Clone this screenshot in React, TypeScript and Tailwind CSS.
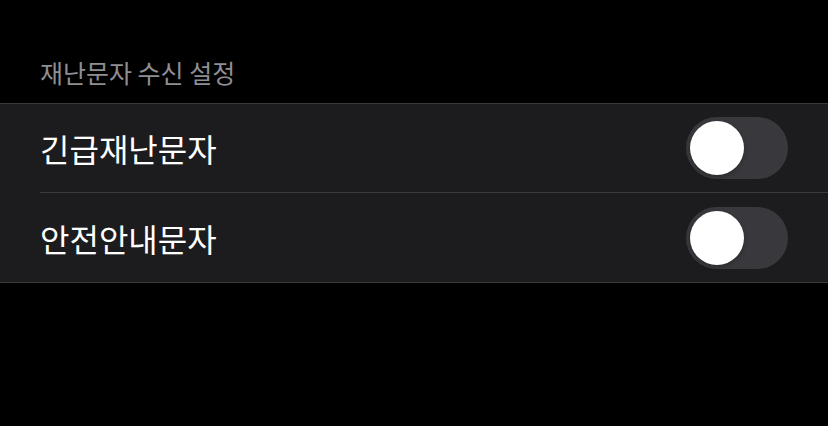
const rows = [
  { label: "긴급재난문자", on: false },
  { label: "안전안내문자", on: false },
];

function Toggle({ on }: { on: boolean }) {
  return (
    <div
      className={`w-[102px] h-[62px] rounded-full p-[4px] flex items-center ${
        on ? "bg-[#30d158] justify-end" : "bg-[#39393d] justify-start"
      }`}
    >
      <div className="w-[54px] h-[54px] rounded-full bg-white shadow-[0_2px_4px_rgba(0,0,0,0.25)]" />
    </div>
  );
}

export default function App() {
  return (
    <main
      className="w-[828px] h-[426px] bg-black overflow-hidden"
      style={{ fontFamily: '"Noto Sans CJK KR", "Noto Sans", sans-serif' }}
    >
      <div className="pt-[55px] pb-[13px] px-10">
        <h2 className="text-[25px] leading-[35px] text-[#8e8e93]">재난문자 수신 설정</h2>
      </div>

      <div className="bg-[#1c1c1e] border-y border-[#3a3a3c]">
        {rows.map((row, i) => (
          <div key={row.label} className="pl-10">
            <div
              className={`pr-10 flex items-center justify-between ${
                i > 0 ? "h-[90px] border-t border-[#3a3a3c]" : "h-[88px]"
              }`}
            >
              <span className="text-[32px] text-white">{row.label}</span>
              <Toggle on={row.on} />
            </div>
          </div>
        ))}
      </div>
    </main>
  );
}
